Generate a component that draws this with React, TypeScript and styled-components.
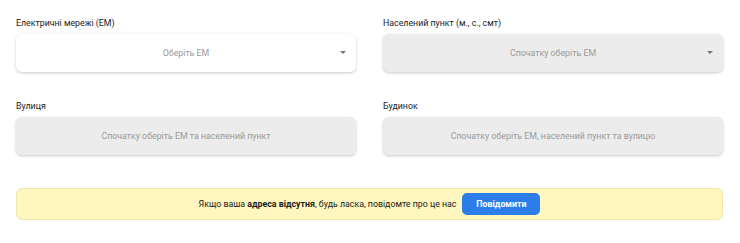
import { createGlobalStyle, styled } from "styled-components";

const GlobalStyle = createGlobalStyle`
  body {
    margin: 0;
    background: #ffffff;
    font-family: Roboto, "Noto Sans", Arial, sans-serif;
  }
`;

const Field = ({
  label,
  placeholder,
  disabled,
  arrow,
}: {
  label: string;
  placeholder: string;
  disabled?: boolean;
  arrow?: boolean;
}) => (
  <FieldWrap>
    <Label>{label}</Label>
    <SelectBox disabled={disabled}>
      <Placeholder>{placeholder}</Placeholder>
      {arrow && <Arrow />}
    </SelectBox>
  </FieldWrap>
);

export default function App() {
  return (
    <Page>
      <GlobalStyle />
      <Grid>
        <Field label="Електричні мережі (ЕМ)" placeholder="Оберіть ЕМ" arrow />
        <Field
          label="Населений пункт (м., с., смт)"
          placeholder="Спочатку оберіть ЕМ"
          disabled
          arrow
        />
        <Field
          label="Вулиця"
          placeholder="Спочатку оберіть ЕМ та населений пункт"
          disabled
        />
        <Field
          label="Будинок"
          placeholder="Спочатку оберіть ЕМ, населений пункт та вулицю"
          disabled
        />
      </Grid>
      <Notice>
        <NoticeText>
          Якщо ваша <b>адреса відсутня</b>, будь ласка, повідомте про це нас
        </NoticeText>
        <ReportButton>Повідомити</ReportButton>
      </Notice>
    </Page>
  );
}

const Page = styled.div`
  padding: 16px 17px 20px 16px;
`;

const Grid = styled.div`
  display: grid;
  grid-template-columns: 1fr 1fr;
  column-gap: 27px;
  row-gap: 27px;
`;

const FieldWrap = styled.div`
  display: flex;
  flex-direction: column;
  gap: 6px;
`;

const Label = styled.div`
  font-size: 8.8px;
  line-height: 12px;
  padding-top: 1px;
  margin-bottom: -1px;
  color: #222222;
`;

const SelectBox = styled.div<{ disabled?: boolean }>`
  position: relative;
  height: 38px;
  border-radius: 6px;
  display: flex;
  align-items: center;
  justify-content: center;
  background: ${({ disabled }) => (disabled ? "#ececec" : "#ffffff")};
  box-shadow: 0 1px 3px rgba(0, 0, 0, 0.22);
`;

const Placeholder = styled.span`
  font-size: 8.8px;
  color: #9a9a9a;
`;

const Arrow = styled.span`
  position: absolute;
  right: 10px;
  top: 17px;
  width: 0;
  height: 0;
  border-left: 3px solid transparent;
  border-right: 3px solid transparent;
  border-top: 3px solid #777777;
`;

const Notice = styled.div`
  margin-top: 33px;
  height: 32px;
  box-sizing: border-box;
  border-radius: 6px;
  background: #fff7bf;
  border: 1px solid #f3e6a6;
  display: flex;
  align-items: center;
  justify-content: center;
  gap: 6px;
`;

const NoticeText = styled.span`
  font-size: 8.8px;
  color: #1a1a1a;

  b {
    font-weight: 700;
  }
`;

const ReportButton = styled.button`
  height: 22px;
  width: 78px;
  border: none;
  border-radius: 5px;
  background: #2b7de9;
  color: #ffffff;
  font-family: inherit;
  font-size: 8.8px;
  font-weight: 700;
  cursor: pointer;
`;
